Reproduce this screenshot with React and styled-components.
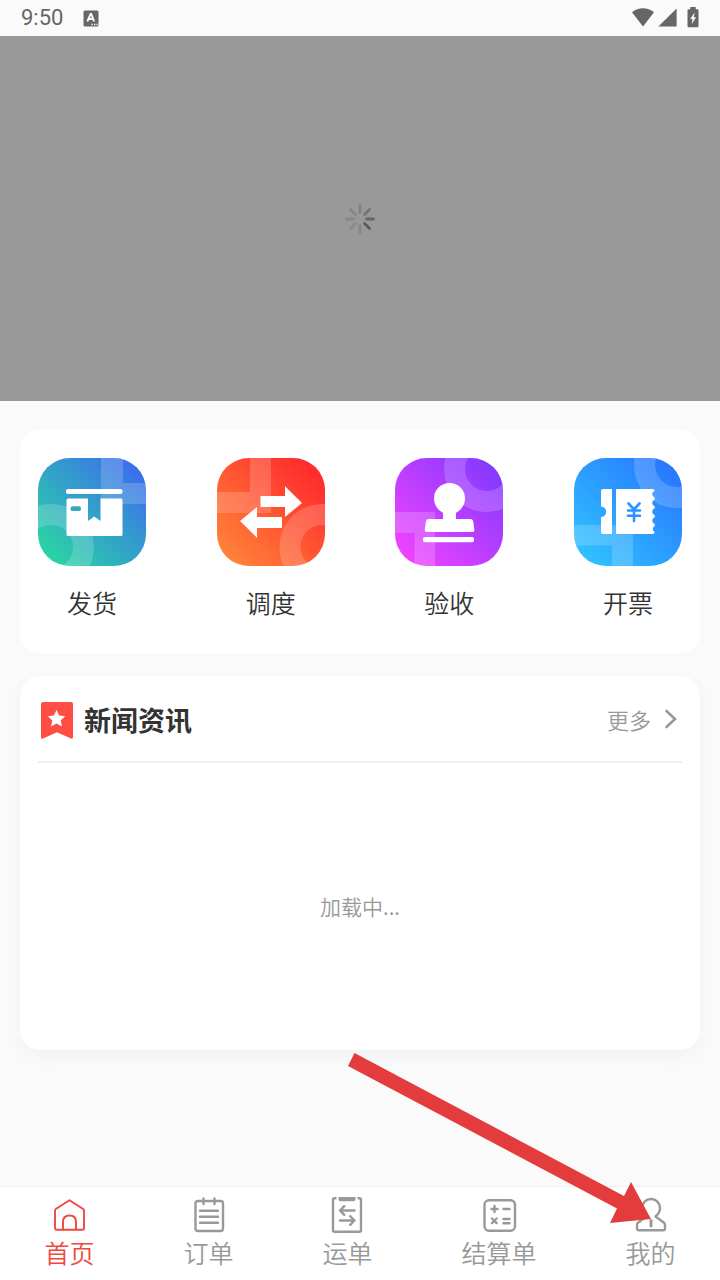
import React from "react";
import styled, { createGlobalStyle } from "styled-components";

const GlobalStyle = createGlobalStyle`
  * {
    box-sizing: border-box;
  }
  body {
    margin: 0;
    background-color: #fafafa;
    font-family: "Noto Sans CJK SC", "Noto Sans", sans-serif;
    font-weight: 350;
    color: #333;
  }
`;

const Page = styled.div`
  position: relative;
  display: flex;
  flex-direction: column;
  min-height: 100vh;
`;

const StatusBar = styled.header`
  display: flex;
  align-items: center;
  justify-content: space-between;
  height: 36px;
  padding: 0 21px;
  color: #666;
`;

const StatusLeft = styled.div`
  display: flex;
  align-items: center;
  gap: 20px;
`;

const StatusRight = styled.div`
  display: flex;
  align-items: center;
  gap: 4px;
  padding-bottom: 2px;
  svg:last-child {
    margin-left: 6px;
  }
`;

const Clock = styled.time`
  font-family: Roboto, sans-serif;
  font-size: 22px;
  font-weight: 400;
  line-height: 36px;
`;

const Banner = styled.section`
  display: flex;
  align-items: center;
  justify-content: center;
  height: 365px;
  background-color: #999;
`;

const Main = styled.main`
  display: flex;
  flex: 1;
  flex-direction: column;
  gap: 23px;
  padding: 29px 20px;
`;

const Card = styled.section`
  border-radius: 20px;
  background-color: #fff;
  box-shadow: 0 6px 18px rgba(205, 222, 235, .24);
`;

const ShortcutCard = styled(Card)`
  display: flex;
  justify-content: space-between;
  padding: 28px 18px 33px;
  box-shadow: none;
`;

const Shortcut = styled.button`
  display: flex;
  flex-direction: column;
  align-items: center;
  gap: 18px;
  padding: 0;
  border: 0;
  background: none;
  color: #333;
  font-family: inherit;
  font-size: 25px;
  font-weight: inherit;
  line-height: 36px;
`;

const Tile = styled.svg`
  display: block;
  width: 108px;
  height: 108px;
  border-radius: 32px;
`;

const NewsCard = styled(Card)`
  display: flex;
  flex-direction: column;
  height: 374px;
  padding: 0 18px;
`;

const NewsHeader = styled.div`
  display: flex;
  align-items: center;
  justify-content: space-between;
  height: 87px;
  padding: 0 3px;
  border-bottom: 2px solid #f0f0f0;
`;

const NewsTitle = styled.h2`
  display: flex;
  align-items: center;
  gap: 11px;
  margin: 0;
  padding-top: 3px;
  font-size: 27px;
  font-weight: 700;
  line-height: 36px;
`;

const MoreLink = styled.a`
  display: flex;
  align-items: center;
  gap: 12px;
  color: #999;
  font-size: 22px;
  line-height: 36px;
  text-decoration: none;
`;

const Loading = styled.p`
  display: flex;
  flex: 1;
  align-items: center;
  justify-content: center;
  margin: 0;
  padding-bottom: 2px;
  color: #999;
  font-size: 21px;
`;

const TabBar = styled.nav`
  display: flex;
  justify-content: space-around;
  position: sticky;
  bottom: 0;
  padding: 10px 0;
  border-top: 1px solid #f0f0f0;
  background-color: #fff;
`;

const Tab = styled.a`
  display: flex;
  flex-direction: column;
  align-items: center;
  gap: 1px;
  color: ${props => (props.$active ? "#f0483e" : "#999")};
  font-size: 25px;
  line-height: 36px;
  text-decoration: none;
`;

const TabSvg = styled.svg`
  display: block;
  width: 36px;
  height: 36px;
  fill: none;
  stroke: currentColor;
  stroke-width: ${props => (props.$thin ? 1.9 : 2.4)};
  stroke-linecap: round;
  stroke-linejoin: round;
`;

/* lies over the page and the tab bar, its tip on the last tab */
const Pointer = styled.svg`
  position: absolute;
  right: 68px;
  bottom: 56px;
  width: 304px;
  height: 172px;
  pointer-events: none;
`;

const KeyboardIcon = () => (
  <svg width="16" height="17" viewBox="0 0 16 17" aria-hidden="true">
    <rect x="0.5" y="0.5" width="15" height="16" rx="1.5" fill="#666" />
    <path d="M4.3 11.5 7.6 4h.6l3 7.5M5.6 9h4.4" fill="none" stroke="#fafafa" strokeWidth="1.9" />
    <path d="M8.4 14.5h1.4M11 14.5h1.4M13.4 14.5h1.2" stroke="#fafafa" strokeWidth="1.4" />
  </svg>
);

const WifiIcon = () => (
  <svg width="22" height="19" viewBox="0 0 22 19" aria-hidden="true">
    <path d="M0 4.2Q5 .3 11 .3T22 4.2L11 18.6Z" fill="#666" />
  </svg>
);

const SignalIcon = () => (
  <svg width="19" height="19" viewBox="0 0 19 19" aria-hidden="true">
    <path d="M18.6.4v18.2H.4Z" fill="#666" />
  </svg>
);

const BatteryIcon = () => (
  <svg width="12" height="21" viewBox="0 0 12 21" aria-hidden="true">
    <path d="M3.3 0h5.4v2.2h1.6q1.2 0 1.2 1.2V19q0 1.3-1.2 1.3H1.7Q.5 20.3 .5 19V3.4Q.5 2.2 1.7 2.2h1.6Z" fill="#666" />
    <path d="M7.6 5.4 3.2 11.9h2.3l-.7 5.2 4.3-6.9H6.8Z" fill="#fafafa" />
  </svg>
);

const SPOKES = [.72, .9, .25, .2, .25, .28, .32, .55];

const Spinner = () => (
  <svg width="32" height="32" viewBox="-16 -16 32 32" role="img" aria-label="加载中">
    {SPOKES.map((opacity, i) => (
      <path
        key={i}
        d="M6.5 0h7"
        stroke="#555"
        strokeWidth="2.8"
        strokeLinecap="round"
        opacity={opacity}
        transform={`rotate(${i * 45})`}
      />
    ))}
  </svg>
);

const TileBase = ({ id, from, to, children }) => (
  <Tile viewBox="0 0 108 108" aria-hidden="true">
    <defs>
      <linearGradient id={id} x1="0.1" y1="0.9" x2="0.9" y2="0.1">
        <stop offset="0" stopColor={from} />
        <stop offset="1" stopColor={to} />
      </linearGradient>
    </defs>
    <rect width="108" height="108" fill={`url(#${id})`} />
    {children}
  </Tile>
);

const Ring = ({ cx, cy }) => (
  <circle cx={cx} cy={cy} r="32.5" fill="none" stroke="#fff" strokeWidth="21" opacity=".18" />
);

const Band = ({ d }) => <path d={d} fill="#fff" opacity=".18" />;

const ShipIcon = () => (
  <TileBase id="ship" from="#2ad3a5" to="#3b70ec">
    <Band d="M63 0h22v25h23v21H63Z" />
    <Ring cx="13" cy="89" />
    <rect x="28" y="31" width="56.5" height="5" rx="2" fill="#fff" />
    <path
      d="M30 40.5h20V63l6.2-4.5L62.5 63V40.5H83q1.5 0 1.5 1.5v34.5q0 1.5-1.5 1.5H30q-1.5 0-1.5-1.5V42q0-1.5 1.5-1.5Z"
      fill="#fff"
    />
    <rect x="32.5" y="48.3" width="10.5" height="4.8" rx="2.2" fill="#37a9bb" />
  </TileBase>
);

const DispatchIcon = () => (
  <TileBase id="dispatch" from="#ff8138" to="#ff2a2c">
    <Band d="M33 0h21v55H0V34h33Z" />
    <Ring cx="105.5" cy="89" />
    <path d="M43.5 38H68V28.3L85 45 68 59V49H43.5Z" fill="#fff" />
    <path d="M65 59H40V49L23 63l17 16.8V70h25Z" fill="#fff" />
  </TileBase>
);

const CheckIcon = () => (
  <TileBase id="check" from="#ec43ff" to="#8739ff">
    <Ring cx="92" cy="11" />
    <Band d="M0 54h40v54H19.5V75H0Z" />
    <circle cx="54.5" cy="40.5" r="15.5" fill="#fff" />
    <path
      d="M47 51h15q-1.5 4-1 10h14.5q2.2 0 2.7 2.2l1.2 8.8q.2 2-1.8 2H31.5q-2 0-1.8-2l1.2-8.8Q31.4 61 33.6 61H48q.5-6-1-10Z"
      fill="#fff"
    />
    <rect x="28" y="79" width="51" height="5.2" rx="2" fill="#fff" />
  </TileBase>
);

const InvoiceIcon = () => (
  <TileBase id="invoice" from="#2fc0ff" to="#2878ff">
    <Ring cx="103" cy="7" />
    <Band d="M0 67h59v41H38V87.5H0Z" />
    <path d="M29 31h9v45h-9q-2 0-2-2V59a5.2 5.2 0 0 0 0-10.4V33q0-2 2-2Z" fill="#fff" />
    <path
      d="M42 31h36.5q2 0 2.2 2a3.3 3.3 0 0 0 0 6.4v2.4a3.3 3.3 0 0 0 0 6.4v2.4a3.3 3.3 0 0 0 0 6.4v2.4a3.3 3.3 0 0 0 0 6.4V68a3.3 3.3 0 0 0 0 6q-.2 2-2.2 2H42Z"
      fill="#fff"
    />
    <path
      d="M54.5 45.5 60 51.5l5.5-6M60 51.5V63M54 52.5h12M54 57.8h12"
      fill="none"
      stroke="#2b93ff"
      strokeWidth="2.6"
      strokeLinecap="round"
    />
  </TileBase>
);

const BookmarkIcon = () => (
  <svg width="32" height="37" viewBox="0 0 32 37" aria-hidden="true">
    <path d="M2 0h28q2 0 2 2v33q0 2.3-2 1.5L16 30.3 2 36.5Q0 37.3 0 35V2Q0 0 2 0Z" fill="#ff4d43" />
    <path
      d="M15.5 8l2.7 5.5 5.9.8-4.3 4.2 1.1 5.9-5.4-2.8-5.4 2.8 1.1-5.9-4.3-4.2 5.9-.8Z"
      fill="#fff"
    />
  </svg>
);

const ChevronIcon = () => (
  <svg width="16" height="20" viewBox="0 0 16 20" aria-hidden="true">
    <path d="M3.5 2 12 10l-8.5 8" fill="none" stroke="#999" strokeWidth="2.6" strokeLinecap="round" />
  </svg>
);

const HomeIcon = () => (
  <TabSvg viewBox="0 0 36 36" aria-hidden="true" $thin>
    <path d="M18.5 3.2 32.2 12q.8.5.8 1.5V31q0 1.7-1.7 1.7H5.7Q4 32.7 4 31V13.5q0-1 .8-1.5Z" />
    <path d="M12 32.5V25q0-6.5 6.5-6.5T25 25v7.5" />
  </TabSvg>
);

const OrderIcon = () => (
  <TabSvg viewBox="0 0 36 36" aria-hidden="true">
    <rect x="5.5" y="4" width="27.5" height="30" rx="2.5" />
    <path d="M13.5 1.5v5.5M24.5 1.5v5.5M10 13.7h18M10 19.7h18M10 25.7h18" />
  </TabSvg>
);

const WaybillIcon = () => (
  <TabSvg viewBox="0 0 36 36" aria-hidden="true">
    <path d="M6.5 1.2H5.5Q4 1.2 4 2.7v30.5q0 1.5 1.5 1.5h25q1.5 0 1.5-1.5V2.7q0-1.5-1.5-1.5h-1" />
    <path d="M9.5 0h17v2.3q0 1.9-1.9 1.9H11.4q-1.9 0-1.9-1.9Z" fill="currentColor" stroke="none" />
    <path d="M25.5 13.5H11M15.3 9.2 11 13.5l4.3 4.3M11 23.5h14.5M21.2 19.2l4.3 4.3-4.3 4.3" />
  </TabSvg>
);

const BillIcon = () => (
  <TabSvg viewBox="0 0 36 36" aria-hidden="true">
    <rect x="3.5" y="3.2" width="30.5" height="30.5" rx="4.5" />
    <path d="M10.500 12h6M13.500 9v6M22.500 12h6M11 21.500l4.600 4.600M15.600 21.500l-4.600 4.600M22.500 22h6M22.500 26.300h6" />
  </TabSvg>
);

const MineIcon = () => (
  <TabSvg viewBox="0 0 36 36" aria-hidden="true">
    <path d="M14.5 19.5Q10 16 10 11a9 9 0 0 1 18 0q0 5-4.500 8.500l8.200 6q1.300 1 1.300 2.500v3.500q0 1.800-1.800 1.800H6.800Q5 33.300 5 31.500V28q0-1.500 1.300-2.500Z" />
    <path d="M19 23.500v5.500" strokeWidth="3" />
  </TabSvg>
);

const shortcuts = [
  { label: "发货", Icon: ShipIcon },
  { label: "调度", Icon: DispatchIcon },
  { label: "验收", Icon: CheckIcon },
  { label: "开票", Icon: InvoiceIcon },
];

const tabs = [
  { label: "首页", Icon: HomeIcon, active: true },
  { label: "订单", Icon: OrderIcon },
  { label: "运单", Icon: WaybillIcon },
  { label: "结算单", Icon: BillIcon },
  { label: "我的", Icon: MineIcon },
];

const App = () => (
  <Page>
    <GlobalStyle />
    <StatusBar>
      <StatusLeft>
        <Clock>9:50</Clock>
        <KeyboardIcon />
      </StatusLeft>
      <StatusRight>
        <WifiIcon />
        <SignalIcon />
        <BatteryIcon />
      </StatusRight>
    </StatusBar>
    <Banner>
      <Spinner />
    </Banner>
    <Main>
      <ShortcutCard>
        {shortcuts.map(({ label, Icon }) => (
          <Shortcut key={label} type="button">
            <Icon />
            {label}
          </Shortcut>
        ))}
      </ShortcutCard>
      <NewsCard>
        <NewsHeader>
          <NewsTitle>
            <BookmarkIcon />
            新闻资讯
          </NewsTitle>
          <MoreLink href="#news">
            更多
            <ChevronIcon />
          </MoreLink>
        </NewsHeader>
        <Loading>加载中...</Loading>
      </NewsCard>
    </Main>
    <TabBar>
      {tabs.map(({ label, Icon, active }) => (
        <Tab key={label} href={`#${label}`} $active={active} aria-current={active ? "page" : undefined}>
          <Icon />
          {label}
        </Tab>
      ))}
    </TabBar>
    <Pointer viewBox="0 0 304 172" aria-hidden="true">
      <path d="M6.5 1 276 144l7-14 20 37-41 4 7-14.5L0 14Z" fill="#e43c3c" />
    </Pointer>
  </Page>
);

export default App;
